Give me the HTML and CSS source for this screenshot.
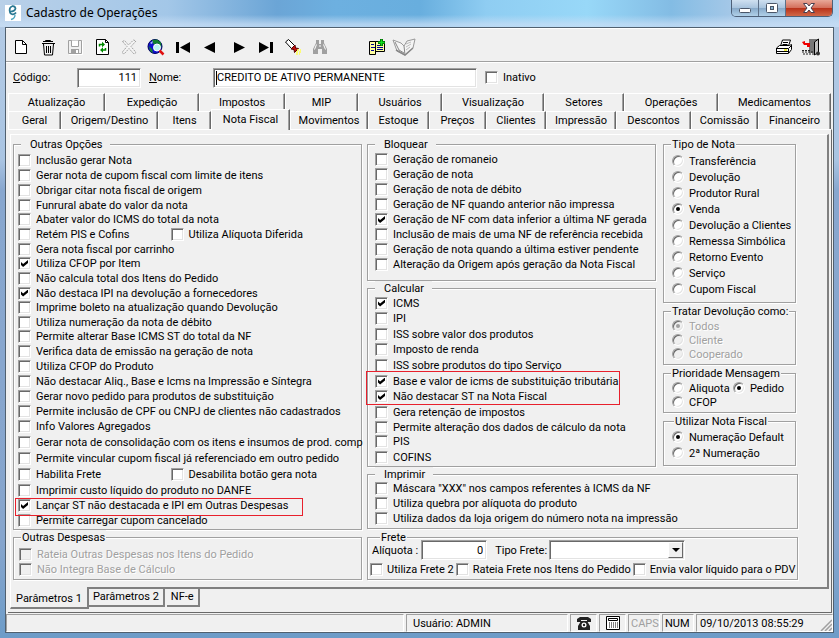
FILE: index.html
```html
<!DOCTYPE html>
<html lang="pt-BR">
<head>
<meta charset="utf-8">
<title>Cadastro de Operações</title>
<link rel="stylesheet" href="styles.css">
</head>
<body>
<header class="titlebar">
  <svg class="app-icon" viewBox="0 0 16 16" aria-hidden="true"><rect width="16" height="16" fill="#fff"/><path d="M5 6.500 Q10 6.500 10.500 3.500 Q10 .8 7.200 1.200 Q4.500 2 4.600 5.500 Q5 9.500 8 9.300 Q10 9 11 7.500" fill="none" stroke="#2a7893" stroke-width="1.700"/><path d="M10 10 Q10 13.500 6 14.500" fill="none" stroke="#49a3bd" stroke-width="1.300"/></svg>
  <h1>Cadastro de Operações</h1>
  <div class="win-buttons">
    <button type="button" class="win-btn" aria-label="Minimizar"><svg viewBox="0 0 14 14" width="14" height="14"><rect x="1.500" y="7.500" width="11" height="4" rx="1" fill="#fff" stroke="#4a5668"/></svg></button>
    <button type="button" class="win-btn" aria-label="Maximizar"><svg viewBox="0 0 14 14" width="14" height="14"><rect x="1.500" y="2.500" width="11" height="9" rx="1" fill="#fff" stroke="#4a5668"/><rect x="5.500" y="5.500" width="3" height="3" fill="#8ab4d0" stroke="#4a5668"/></svg></button>
    <button type="button" class="win-btn win-close" aria-label="Fechar"><svg viewBox="0 0 14 14" width="14" height="14"><path d="M1.500 2.500h3.500l2 2.500 2-2.500h3.500L9 7l3.500 4.500H9L7 9l-2 2.500H1.500L5 7z" fill="#fff" stroke="#4a4050"/></svg></button>
  </div>
</header>

<main class="client">
  <div class="toolbar">
    <div class="tools">
      <button type="button" class="tool" aria-label="Novo"><svg viewBox="0 0 18 18"><path d="M3.500 2.500h7l4 4v9h-11z" fill="#fff" stroke="#000"/><path d="M10.500 2.500v4h4" fill="none" stroke="#000"/></svg></button>
      <button type="button" class="tool" aria-label="Excluir"><svg viewBox="0 0 18 18"><path d="M3 5.500h13M6.500 4V2.500h5V4M4 3.500h10M4.500 6l1 11h8l1-11" fill="none" stroke="#000"/><path d="M7.500 8v7M9.500 8v7M11.500 8v7" stroke="#000"/></svg></button>
      <button type="button" class="tool" aria-label="Salvar"><svg viewBox="0 0 18 18"><path d="M2.500 2.500h13v13h-13z" fill="#f0f0f0" stroke="#a0a0a0"/><path d="M5.500 2.500v6h7v-6" fill="#fff" stroke="#a0a0a0"/><path d="M5 11h8v5H5z" fill="#a0a0a0"/><path d="M10 12h2v3h-2z" fill="#fff"/><path d="M3 16.500h13.500V3" stroke="#fff" fill="none"/></svg></button>
      <button type="button" class="tool" aria-label="Atualizar"><svg viewBox="0 0 18 18"><path d="M3.500 1.500h9l3 3v12h-12z" fill="#fff" stroke="#000"/><path d="M12.500 1.500v3h3" fill="none" stroke="#000"/><path d="M6.500 8.500v-2h4M12.500 10v2h-4" fill="none" stroke="#080" stroke-width="1.500"/><path d="M9 3.800v5.400l3-2.700zM10 9.300v5.400l-3-2.700z" fill="#080"/></svg></button>
      <button type="button" class="tool" aria-label="Cancelar"><svg viewBox="0 0 18 18"><path d="M2.500 3.500l2-1 4 4.500 5-5 2.500 1-5 5.500 5 6-2 1.500-5-5.500-5 5.500-2-1.500L7 8.500z" fill="#f4f4f4" stroke="#a0a0a0" stroke-dasharray="2 1"/></svg></button>
      <button type="button" class="tool" aria-label="Pesquisar"><svg viewBox="0 0 18 18"><circle cx="8" cy="8.500" r="7" fill="#1010d0" stroke="#000060"/><path d="M5 2l5-.5 4 3 .5 5-3-1-1-3-4 1zM2 8l3 3 1 4-3-2z" fill="#108030"/><path d="M3 5l3-2-1 3z" fill="#b0c8ff"/><circle cx="10" cy="9.500" r="3.500" fill="#b9f4f4" stroke="#fff"/><path d="M12.500 12.500l4 4" stroke="#e01010" stroke-width="2.500"/></svg></button>
      <button type="button" class="tool" aria-label="Primeiro"><svg viewBox="0 0 18 18"><path d="M2 4h3v11H2zM16 4v11L6 9.500z" fill="#000"/></svg></button>
      <button type="button" class="tool" aria-label="Anterior"><svg viewBox="0 0 18 18"><path d="M14 4v11L3 9.500z" fill="#000"/></svg></button>
    </div>
    <div class="tools">
      <button type="button" class="tool" aria-label="Próximo"><svg viewBox="0 0 18 18"><path d="M4 4v11l11-5.500z" fill="#000"/></svg></button>
      <button type="button" class="tool" aria-label="Último"><svg viewBox="0 0 18 18"><path d="M13 4h3v11h-3zM2 4v11l10-5.500z" fill="#000"/></svg></button>
      <button type="button" class="tool" aria-label="Localizar"><svg viewBox="0 0 18 18"><path d="M1.500 4l3-2.500 6 6-3 3z" fill="#fff" stroke="#000"/><path d="M7 11l4-4 .5 3 3 .5-4 4-.5-3z" fill="#c01010" stroke="#500"/><path d="M12 14h5M13 12h4M12 16h4" stroke="#ffff50" stroke-width="1.500" stroke-dasharray="2 1"/></svg></button>
      <button type="button" class="tool" aria-label="Binóculo"><svg viewBox="0 0 18 18"><path d="M5 2h3v4h2V2h3v3l3 6v5h-5v-5H7v5H2v-5l3-6z" fill="#a0a0a0"/><path d="M5.500 6.500l-2 5M12.500 6.500l2 5M8 8h2" stroke="#fff" fill="none"/></svg></button>
    </div>
    <div class="tools tools-extra">
      <button type="button" class="tool" aria-label="Copiar cadastro"><svg viewBox="0 0 18 18"><path d="M1.500 3.500h6v13h-6zM7.500 3.500h9v10h-9z" fill="#ffffa0" stroke="#000"/><path d="M3 6.500h3M3 9.500h4M3 12.500h3M9 7.500h6M9 9.500h6M9 11.500h6" stroke="#000090"/><path d="M13.500 1v7M10 4.500h7" stroke="#006000" stroke-width="3"/><path d="M13.500 1.500v6M10.500 4.500h6" stroke="#10e020" stroke-width="1.500"/></svg></button>
      <button type="button" class="tool" aria-label="Livro"><svg class="wide" viewBox="0 0 24 18"><path d="M1 2l8 3 3 3 3-5 8-2-2 9-8 7-8-4z" fill="#f4f4f4" stroke="#999"/><path d="M12 8l1 9M3 4l4 8 5 3" fill="none" stroke="#888"/><path d="M14 6l5-2M14 9l5-3M14 12l4-3" stroke="#bbb"/><path d="M4 12l9 5 8-7" fill="none" stroke="#888" stroke-width="1.500"/></svg></button>
    </div>
    <div class="tools tools-end">
      <button type="button" class="tool" aria-label="Imprimir"><svg viewBox="0 0 18 18"><path d="M5.500 8l2-6h8l-2 6" fill="#fff" stroke="#000"/><path d="M8 4.500h5M7.500 6.500h5" stroke="#000"/><path d="M1.500 10l3-2.500h10l2-1v5l-3 4h-12z" fill="#fff" stroke="#000"/><path d="M1.500 10.500h12l3-3M1.500 13.500h12M13.500 11v4" fill="none" stroke="#000"/><path d="M9 12h3" stroke="#ee0" stroke-width="1.500"/></svg></button>
      <button type="button" class="tool" aria-label="Sair"><svg viewBox="0 0 18 18"><path d="M7 1h10v14H7z" fill="#777"/><path d="M12.500 4l4-3v13l-4 3z" fill="#c0c0c0" stroke="#000"/><path d="M0 4l3-1v2h5v4H5v-2H2z" fill="#e00"/><path d="M0 14h11M1 16h11M0 12.500h8" stroke="#222" stroke-dasharray="2 1"/><circle cx="16" cy="15.500" r="2" fill="#333"/></svg></button>
    </div>
  </div>

  <div class="record">
    <label for="codigo" class="lbl-code"><u>C</u>ódigo:</label>
    <input id="codigo" class="field code" type="text" value="111">
    <label for="nome" class="lbl-name"><u>N</u>ome:</label>
    <input id="nome" class="field name" type="text" value="CREDITO DE ATIVO PERMANENTE">
    <label class="opt"><input type="checkbox">Inativo</label>
  </div>

  <nav class="tabs tabs-back">
    <button type="button" class="tab">Atualização</button><button type="button" class="tab">Expedição</button><button type="button" class="tab">Impostos</button><button type="button" class="tab">MIP</button><button type="button" class="tab">Usuários</button><button type="button" class="tab">Visualização</button><button type="button" class="tab">Setores</button><button type="button" class="tab">Operações</button><button type="button" class="tab">Medicamentos</button>
  </nav>
  <nav class="tabs tabs-front">
    <button type="button" class="tab">Geral</button><button type="button" class="tab">Origem/Destino</button><button type="button" class="tab">Itens</button><button type="button" class="tab active">Nota Fiscal</button><button type="button" class="tab">Movimentos</button><button type="button" class="tab">Estoque</button><button type="button" class="tab">Preços</button><button type="button" class="tab">Clientes</button><button type="button" class="tab">Impressão</button><button type="button" class="tab">Descontos</button><button type="button" class="tab">Comissão</button><button type="button" class="tab">Financeiro</button>
  </nav>

  <section class="page">
    <div class="sheet">
      <div class="column">
        <fieldset class="box box-options">
          <legend class="inset">Outras Opções</legend>
          <label class="opt"><input type="checkbox">Inclusão gerar Nota</label>
          <label class="opt"><input type="checkbox">Gerar nota de cupom fiscal com limite de itens</label>
          <label class="opt"><input type="checkbox">Obrigar citar nota fiscal de origem</label>
          <label class="opt tight"><input type="checkbox">Funrural abate do valor da nota</label>
          <label class="opt"><input type="checkbox">Abater valor do ICMS do total da nota</label>
          <div class="pair"><label class="opt"><input type="checkbox">Retém PIS e Cofins</label><label class="opt"><input type="checkbox">Utiliza Alíquota Diferida</label></div>
          <label class="opt tight"><input type="checkbox">Gera nota fiscal por carrinho</label>
          <label class="opt"><input type="checkbox" checked>Utiliza CFOP por Item</label>
          <label class="opt"><input type="checkbox">Não calcula total dos Itens do Pedido</label>
          <label class="opt tight"><input type="checkbox" checked>Não destaca IPI na devolução a fornecedores</label>
          <label class="opt"><input type="checkbox">Imprime boleto na atualização quando Devolução</label>
          <label class="opt tight"><input type="checkbox">Utiliza numeração da nota de débito</label>
          <label class="opt"><input type="checkbox">Permite alterar Base ICMS ST do total da NF</label>
          <label class="opt"><input type="checkbox">Verifica data de emissão na geração de nota</label>
          <label class="opt"><input type="checkbox">Utiliza CFOP do Produto</label>
          <label class="opt"><input type="checkbox">Não destacar Aliq., Base e Icms na Impressão e Síntegra</label>
          <label class="opt"><input type="checkbox">Gerar novo pedido para produtos de substituição</label>
          <label class="opt"><input type="checkbox">Permite inclusão de CPF ou CNPJ de clientes não cadastrados</label>
          <label class="opt"><input type="checkbox">Info Valores Agregados</label>
          <label class="opt loose"><input type="checkbox">Gerar nota de consolidação com os itens e insumos de prod. comp</label>
          <label class="opt loose"><input type="checkbox">Permite vincular cupom fiscal já referenciado em outro pedido</label>
          <div class="pair"><label class="opt loose"><input type="checkbox">Habilita Frete</label><label class="opt loose"><input type="checkbox">Desabilita botão gera nota</label></div>
          <label class="opt loose"><input type="checkbox">Imprimir custo líquido do produto no DANFE</label>
          <div class="marked marked-one"><label class="opt"><input type="checkbox" checked>Lançar ST não destacada e IPI em Outras Despesas</label></div>
          <label class="opt"><input type="checkbox">Permite carregar cupom cancelado</label>
        </fieldset>
        <fieldset class="box box-expenses" disabled>
          <legend>Outras Despesas</legend>
          <label class="opt"><input type="checkbox">Rateia Outras Despesas nos Itens do Pedido</label>
          <label class="opt"><input type="checkbox">Não Integra Base de Cálculo</label>
        </fieldset>
      </div>

      <div class="column">
        <div class="upper">
          <div class="column">
            <fieldset class="box box-block">
              <legend class="inset">Bloquear</legend>
              <label class="opt"><input type="checkbox">Geração de romaneio</label>
              <label class="opt"><input type="checkbox">Geração de nota</label>
              <label class="opt tight"><input type="checkbox">Geração de nota de débito</label>
              <label class="opt loose"><input type="checkbox">Geração de NF quando anterior não impressa</label>
              <label class="opt"><input type="checkbox" checked>Geração de NF com data inferior a última NF gerada</label>
              <label class="opt"><input type="checkbox">Inclusão de mais de uma NF de referência recebida</label>
              <label class="opt"><input type="checkbox">Geração de nota quando a última estiver pendente</label>
              <label class="opt"><input type="checkbox">Alteração da Origem após geração da Nota Fiscal</label>
            </fieldset>
            <fieldset class="box box-calc">
              <legend class="inset">Calcular</legend>
              <label class="opt loose"><input type="checkbox" checked>ICMS</label>
              <label class="opt"><input type="checkbox">IPI</label>
              <label class="opt loose"><input type="checkbox">ISS sobre valor dos produtos</label>
              <label class="opt"><input type="checkbox">Imposto de renda</label>
              <label class="opt loose"><input type="checkbox">ISS sobre produtos do tipo Serviço</label>
              <div class="marked marked-two">
                <label class="opt loose"><input type="checkbox" checked>Base e valor de icms de substituição tributária</label>
                <label class="opt"><input type="checkbox" checked>Não destacar ST na Nota Fiscal</label>
              </div>
              <label class="opt loose"><input type="checkbox">Gera retenção de impostos</label>
              <label class="opt tight"><input type="checkbox">Permite alteração dos dados de cálculo da nota</label>
              <label class="opt"><input type="checkbox">PIS</label>
              <label class="opt loose"><input type="checkbox">COFINS</label>
            </fieldset>
          </div>
          <div class="column side">
            <fieldset class="box box-type">
              <legend>Tipo de Nota</legend>
              <label class="opt loose"><input type="radio" name="tipo">Transferência</label>
              <label class="opt loose"><input type="radio" name="tipo">Devolução</label>
              <label class="opt loose"><input type="radio" name="tipo">Produtor Rural</label>
              <label class="opt loose"><input type="radio" name="tipo" checked>Venda</label>
              <label class="opt loose"><input type="radio" name="tipo">Devolução a Clientes</label>
              <label class="opt loose"><input type="radio" name="tipo">Remessa Simbólica</label>
              <label class="opt loose"><input type="radio" name="tipo">Retorno Evento</label>
              <label class="opt loose"><input type="radio" name="tipo">Serviço</label>
              <label class="opt loose"><input type="radio" name="tipo">Cupom Fiscal</label>
            </fieldset>
            <fieldset class="box box-small" disabled>
              <legend>Tratar Devolução como:</legend>
              <label class="opt tight"><input type="radio" name="tratar" checked>Todos</label>
              <label class="opt tight"><input type="radio" name="tratar">Cliente</label>
              <label class="opt tight"><input type="radio" name="tratar">Cooperado</label>
            </fieldset>
            <fieldset class="box box-small">
              <legend>Prioridade Mensagem</legend>
              <div class="pair"><label class="opt tight"><input type="radio" name="prio">Aliquota</label><label class="opt tight"><input type="radio" name="prio" checked>Pedido</label></div>
              <label class="opt tight"><input type="radio" name="prio">CFOP</label>
            </fieldset>
            <fieldset class="box box-number">
              <legend>Utilizar Nota Fiscal</legend>
              <label class="opt loose"><input type="radio" name="num" checked>Numeração Default</label>
              <label class="opt loose"><input type="radio" name="num">2ª Numeração</label>
            </fieldset>
          </div>
        </div>
        <fieldset class="box box-print">
          <legend class="inset">Imprimir</legend>
          <label class="opt"><input type="checkbox">Máscara "XXX" nos campos referentes à ICMS da NF</label>
          <label class="opt"><input type="checkbox">Utiliza quebra por alíquota do produto</label>
          <label class="opt"><input type="checkbox">Utiliza dados da loja origem do número nota na impressão</label>
        </fieldset>
        <fieldset class="box box-freight">
          <legend>Frete</legend>
          <div class="freight-row">
            <label for="aliq">Alíquota :</label>
            <input id="aliq" class="field rate" type="text" value="0">
            <label for="tipofrete" class="lbl-freight">Tipo Frete:</label>
            <span class="combo"><select id="tipofrete"><option></option><option>CIF</option><option>FOB</option></select><span class="arrow"></span></span>
          </div>
          <div class="freight-checks">
            <label class="opt"><input type="checkbox">Utiliza Frete 2</label>
            <label class="opt"><input type="checkbox">Rateia Frete nos Itens do Pedido</label>
            <label class="opt"><input type="checkbox">Envia valor líquido para o PDV</label>
          </div>
        </fieldset>
      </div>
    </div>
    <nav class="subtabs">
      <button type="button" class="subtab current">Parâmetros 1</button><button type="button" class="subtab">Parâmetros 2</button><button type="button" class="subtab">NF-e</button>
    </nav>
  </section>

  <footer class="status">
    <span class="cell"></span>
    <span class="cell user">Usuário: ADMIN</span>
    <span class="cell icon"><svg viewBox="0 0 16 14" width="16" height="14" aria-hidden="true"><path d="M1 6V3l3-2h8l3 2v3h-4V4H5v2zM5 5h6l3 5v4H2v-4z" fill="#222"/><circle cx="8" cy="9" r="2.500" fill="#fff"/><circle cx="8" cy="9" r="1.200" fill="#222"/></svg></span>
    <span class="cell icon"><svg viewBox="0 0 16 14" width="16" height="14" aria-hidden="true"><path d="M1.500.5h13v13h-13z" fill="#fff" stroke="#000"/><path d="M3.500 2.500h9v2h-9z" fill="none" stroke="#000"/><path d="M4 7h9M4 9h9M4 11h9" stroke="#000" stroke-dasharray="1 1"/></svg></span>
    <span class="cell off">CAPS</span>
    <span class="cell">NUM</span>
    <span class="cell clock">09/10/2013 08:55:29<svg class="grip" viewBox="0 0 12 12" width="12" height="12" aria-hidden="true"><path d="M1 12L12 1M5 12l7-7M9 12l3-3" stroke="#a0a0a0" stroke-width="1.500"/></svg></span>
  </footer>
</main>
</body>
</html>
```
FILE: styles.css
```css
* { box-sizing: border-box; }

body {
  margin: 0;
  min-height: 100vh;
  padding: 0 5px 5px;
  display: flex;
  flex-direction: column;
  font: 11px/13px Roboto, "Liberation Sans", sans-serif;
  color: #000;
  background: linear-gradient(#b5cce6 0, #a9c4e2 160px, #88a7cf 190px, #86a5cd 85%, #6d9cc8 100%);
}

button, input, select { font: inherit; color: inherit; margin: 0; }
button { border: 0; padding: 0; background: none; }

/* Title bar */
.titlebar {
  height: 27px;
  margin: 0 -5px;
  padding: 0 6px 0 5px;
  display: flex;
  align-items: flex-start;
  background:
    linear-gradient(rgba(255,255,255,0) 55%, rgba(200,222,245,.75) 90%),
    linear-gradient(90deg, #b9d0e8 0, #a3c7e8 20%, #6ba5d6 33%, #6db0e0 40%, #68aede 50%, #8fcdf2 58%, #98d8f8 70%, #83bce4 80%, #a8c9e8 88%, #b4d2ee 100%);
}
.app-icon { width: 16px; height: 16px; margin-top: 5px; }
.titlebar h1 {
  flex: 1;
  margin: 4px 0 0 5px;
  font: 12px/18px "Noto Sans", "Open Sans", sans-serif;
}
.win-buttons {
  display: flex;
  border: 1px solid #4d6078;
  border-top: 0;
  border-radius: 0 0 5px 5px;
  overflow: hidden;
}
.win-btn {
  width: 27px;
  height: 16px;
  display: flex;
  align-items: center;
  justify-content: center;
  border-right: 1px solid #5d7088;
  background: linear-gradient(#cfe0f0, #a9c4de 48%, #86a8c8 50%, #b0d0e8);
}
.win-close {
  width: 46px;
  border-right: 0;
  background: linear-gradient(#e8a898, #d4705c 48%, #b83018 50%, #d06848);
}

/* Window body */
.client {
  flex: 1;
  display: flex;
  flex-direction: column;
  border: 1px solid #50606f;
  background: #f0f0f0;
}

.toolbar {
  height: 34px;
  padding: 3px 9px 0 1px;
  display: flex;
  align-items: center;
  border-top: 1px solid #fff;
  border-bottom: 1px solid #a0a0a0;
}
.tools { display: flex; margin-right: 2px; }
.tools-extra { margin-left: 28px; }
.tools-end { margin-left: auto; margin-right: 0; }
.tool {
  width: 27px;
  height: 26px;
  display: flex;
  align-items: center;
  justify-content: center;
}
.tool svg { width: 18px; height: 18px; flex: none; }
.tool svg.wide { width: 24px; }

.record {
  height: 31px;
  padding: 0 7px 1px;
  display: flex;
  align-items: center;
  border-top: 1px solid #fff;
}
.lbl-code { width: 64px; }
.lbl-name { width: 72px; padding-left: 8px; }
.field {
  height: 20px;
  padding: 1px 3px;
  border: 1px solid;
  border-color: #a0a0a0 #fff #fff #a0a0a0;
  border-radius: 0;
  box-shadow: inset 1px 1px 0 #696969, inset -1px -1px 0 #e3e3e3;
  background: #fff;
  outline: 0;
}
.code { width: 64px; text-align: right; }
.name {
  flex: 0 1 264px;
  margin-right: 8px;
  background: linear-gradient(#000, #000) 2px 2px / 1px 14px no-repeat #fff;
}

/* Check boxes and radio buttons */
.opt {
  height: 15px;
  display: flex;
  align-items: center;
  gap: 5px;
  white-space: nowrap;
}
.opt.tight { height: 14px; }
.opt.loose { height: 16px; }
input[type="checkbox"], input[type="radio"] {
  appearance: none;
  flex: none;
  width: 13px;
  height: 13px;
  border: 1px solid;
  border-color: #a0a0a0 #fff #fff #a0a0a0;
  box-shadow: inset 1px 1px 0 #696969, inset -1px -1px 0 #e3e3e3;
  background: #fff;
  display: grid;
  place-items: center;
}
input[type="radio"] { width: 12px; height: 12px; border-radius: 50%; }
input[type="checkbox"]:checked::before {
  content: "";
  width: 7px;
  height: 7px;
  background: #000;
  clip-path: polygon(0 28%, 30% 58%, 100% 0, 100% 42%, 30% 100%, 0 72%);
}
input[type="radio"]:checked::before {
  content: "";
  width: 4px;
  height: 4px;
  border-radius: 50%;
  background: #000;
}
fieldset:disabled .opt { color: #a0a0a0; text-shadow: 1px 1px 0 #fff; }
fieldset:disabled input { background: #f0f0f0; }
fieldset:disabled input:checked::before { background: #a0a0a0; }

/* Main tabs */
.tabs { display: grid; padding: 0 2px; }
.tabs-back { grid-template-columns: 97fr 94fr 86fr 73fr 84fr 102fr 80fr 94fr 113fr; }
.tabs-front { grid-template-columns: 53fr 97fr 53fr 79fr 78fr 61fr 57fr 60fr 70fr 75fr 67fr 73fr; }
.tab {
  height: 18px;
  border: 1px solid #fff;
  border-right-color: #696969;
  border-bottom: 0;
  box-shadow: inset -1px 0 0 #a0a0a0;
  white-space: nowrap;
}
.tab.active {
  height: 21px;
  margin: -2px 0 -1px;
  padding-bottom: 2px;
  background: #f0f0f0;
  position: relative;
}

/* Tab page */
.page {
  margin: 0 1px 0 2px;
  padding: 4px 2px 3px;
  border: 1px solid #fff;
  border-width: 1px 1px 1px 0;
  border-right-color: #696969;
  border-bottom-color: #696969;
}
.sheet {
  display: grid;
  grid-template-columns: minmax(0, 349fr) minmax(0, 431fr);
  gap: 5px;
  padding: 2px 29px 7px 2px;
  border: 1px solid #fff;
  border-right: 2px solid #808080;
  border-bottom: 2px solid #808080;
}
.column { display: flex; flex-direction: column; min-width: 0; }
.upper {
  display: grid;
  grid-template-columns: minmax(0, 289fr) minmax(0, 133fr);
  gap: 7px;
  padding-right: 2px;
}
.side { gap: 1px; }

.box {
  min-width: 0;
  margin: 0;
  border: 1px solid #a0a0a0;
  box-shadow: 1px 1px 0 #fff, inset 1px 1px 0 #fff;
}
.box legend {
  margin-left: 0;
  padding: 2px 1px 0;
  line-height: 12px;
  white-space: nowrap;
  background: #f0f0f0;
}
.box legend.inset { padding: 2px 8px 0 9px; }
.box-options { padding: 2px 4px 1px; }
.box-options legend.inset { margin-left: 3px; }
.box-expenses { padding: 3px 5px 2px; }
.box-block { padding: 1px 7px 8px; }
.box-calc { padding: 0 7px 1px; }
.box-print { padding: 0 7px 2px; margin-bottom: 1px; }
.box-freight { padding: 0 2px 2px; }
.box-type { padding: 2px 8px 5px; }
.box-small { padding: 1px 8px 3px; }
.box-number { padding: 1px 8px 4px; }
.box-type legend, .box-small legend { margin-left: -1px; }
.box-number legend { margin-left: 2px; }
.box-expenses legend { margin-left: 2px; }
.box-freight legend { margin-left: 10px; }
.box-block legend.inset, .box-calc legend.inset, .box-print legend.inset { margin-left: 0; }

.pair { display: grid; grid-template-columns: 45% 55%; }
.box-small .pair { grid-template-columns: 61px 1fr; }

/* Red highlight frames */
.marked { position: relative; }
.marked::after {
  content: "";
  position: absolute;
  border: 1px solid #e8202c;
  pointer-events: none;
}
.marked-one::after { inset: 0 54px -3px -3px; }
.marked-two::after { inset: -2px 28px -1px -9px; }

.freight-row {
  height: 20px;
  margin-top: -4px;
  margin-bottom: 2px;
  padding-left: 2px;
  display: flex;
  align-items: center;
  position: relative;
}
.rate { width: 66px; margin-left: 3px; text-align: right; }
.lbl-freight { margin: 0 2px 0 8px; }
.combo { position: relative; width: 136px; height: 20px; display: flex; }
.combo select {
  appearance: none;
  width: 100%;
  border: 1px solid;
  border-color: #a0a0a0 #fff #fff #a0a0a0;
  border-radius: 0;
  box-shadow: inset 1px 1px 0 #696969, inset -1px -1px 0 #e3e3e3;
  background: #fff;
}
.arrow {
  position: absolute;
  top: 2px;
  right: 2px;
  bottom: 2px;
  width: 15px;
  display: grid;
  place-items: center;
  border: 1px solid;
  border-color: #fff #696969 #696969 #fff;
  background: #f0f0f0;
  pointer-events: none;
}
.arrow::before {
  content: "";
  border: 4px solid transparent;
  border-top-color: #000;
  border-bottom: 0;
}
.freight-checks { display: flex; gap: 2px; }
.freight-checks .opt { gap: 4px; }

/* Lower tabs */
.subtabs { display: flex; align-items: flex-start; height: 20px; }
.subtab {
  height: 19px;
  margin-top: -1px;
  margin-right: 2px;
  padding: 0 4px;
  border-right: 2px solid #808080;
  border-bottom: 2px solid #808080;
  white-space: nowrap;
}
.subtab.current {
  height: 22px;
  margin-top: -2px;
  margin-right: 0;
  padding: 2px 5px 0;
  border-left: 1px solid #fff;
  background: #f0f0f0;
}

/* Status bar */
.status {
  flex: 1;
  min-height: 19px;
  padding-top: 1px;
  display: grid;
  grid-template-columns: 1fr 162px 27px 27px 32px 32px 137px;
  gap: 2px;
}
.cell {
  display: flex;
  align-items: center;
  padding: 0 2px;
  border: 1px solid;
  border-color: #a0a0a0 #fff #fff #a0a0a0;
  white-space: nowrap;
}
.cell.user { padding-left: 6px; }
.cell.icon { justify-content: center; }
.cell.off { color: #a0a0a0; }
.cell.clock { padding: 0 0 0 3px; justify-content: space-between; }
.grip { align-self: flex-end; }
```
